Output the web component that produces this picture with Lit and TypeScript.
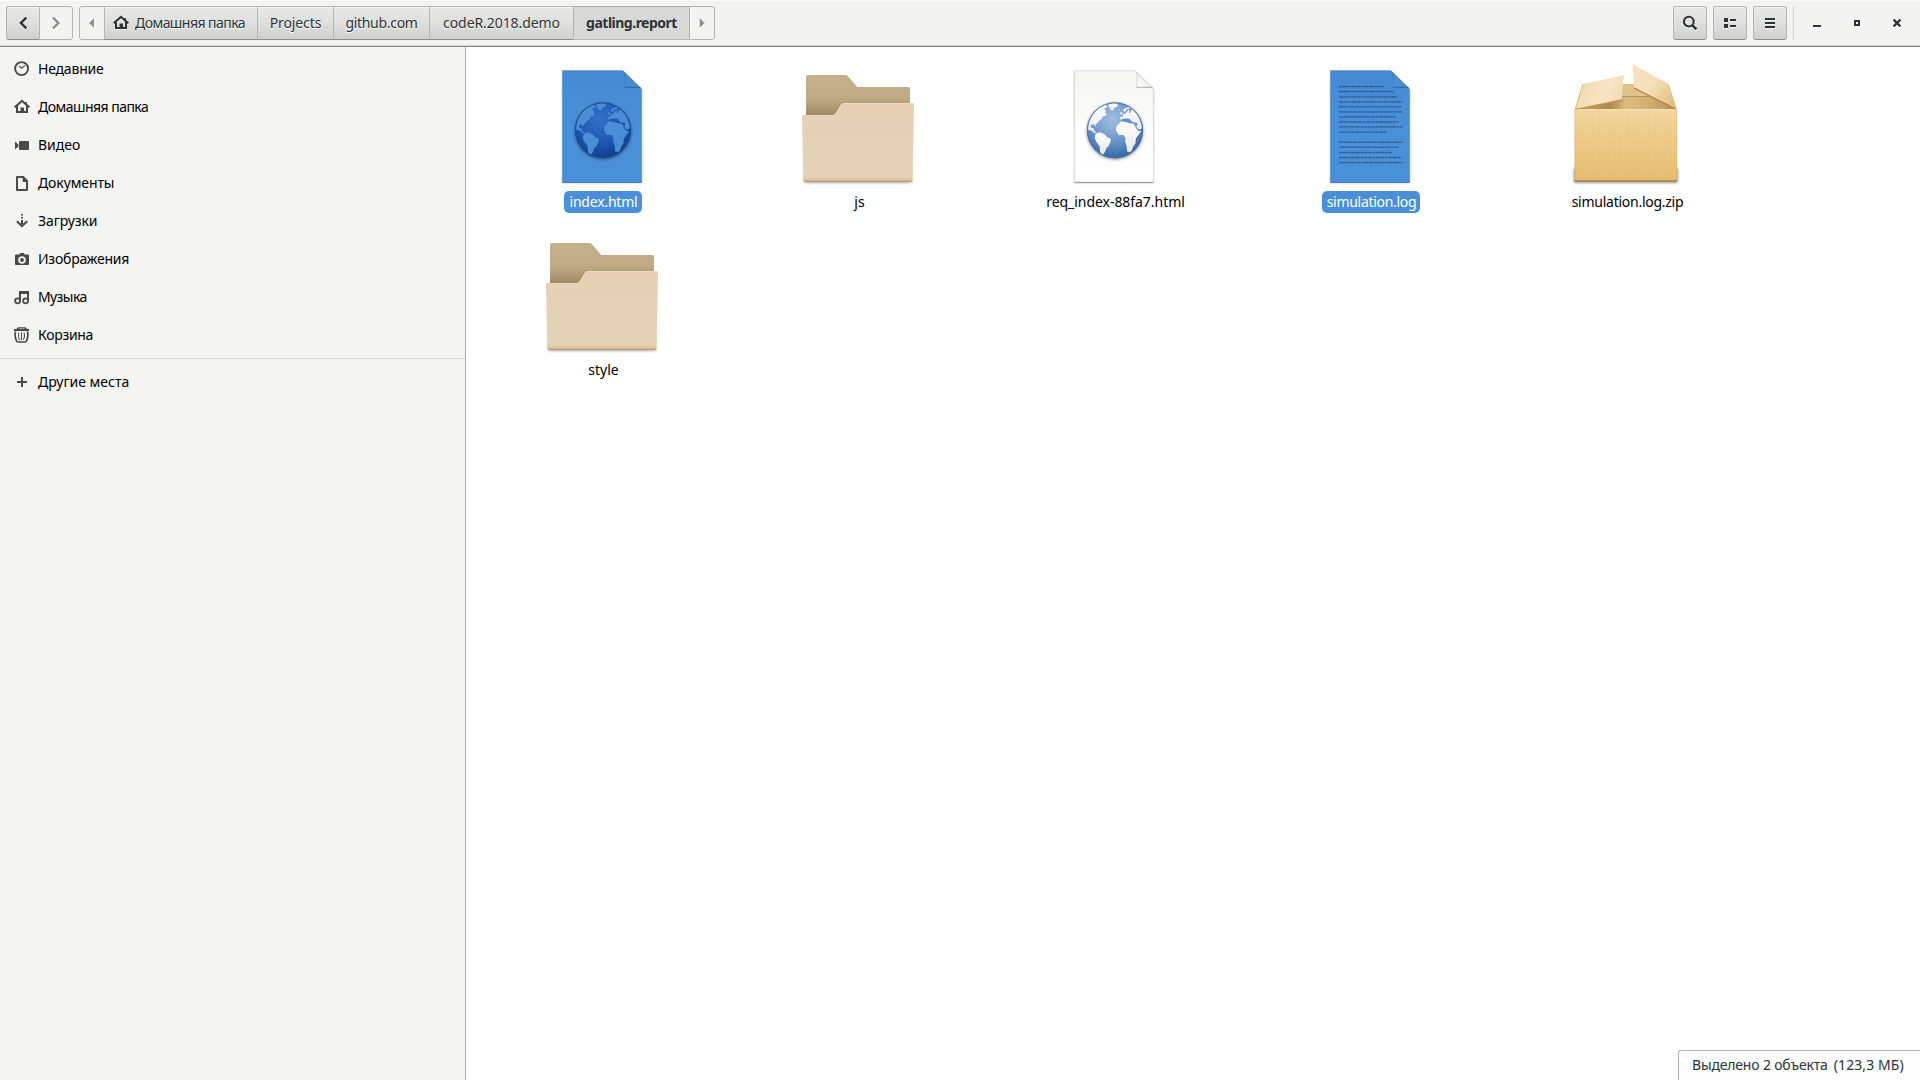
import { LitElement, html, svg, css, TemplateResult } from "lit";
import { customElement } from "lit/decorators.js";
import { classMap } from "lit/directives/class-map.js";

type Label = { text: string; track?: number };
type Place = Label & { icon: TemplateResult };
type FileItem = Label & { art: TemplateResult; selected?: boolean };

/* ---------- 16px symbolic icons ---------- */
const sym = (body: TemplateResult) =>
  html`<svg class="sym" width="16" height="16" viewBox="0 0 16 16" fill="currentColor">${body}</svg>`;

const icons = {
  home: sym(svg`<path d="M8 .6 0 7.4 1.300 9 2 8.400V14h12V8.400l.7.6L16 7.400 12.900 4.800V3h-1.600v.5zM8 3.200l4 3.500V12h-2V8.500H6.500V12H4V6.700z" fill-rule="evenodd"/>`),
  clock: sym(svg`<circle cx="7.6" cy="7.6" r="6.5" fill="none" stroke="currentColor" stroke-width="1.9"/><path d="M5 4.8 7.5 7.2 11.2 4.4" fill="none" stroke="currentColor" stroke-width="1.1"/>`),
  video: sym(svg`<path d="M1 4.400 4.400 7.400V9.600L1 12.600z"/><rect x="5" y="4" width="10" height="9" rx="1"/>`),
  doc: sym(svg`<path d="M2 2Q2 1 3 1H9.700L14 5.400V15Q14 16 13 16H3Q2 16 2 15zM4 3V14H12V7H9.600Q8.600 7 8.600 6V3z" fill-rule="evenodd"/>`),
  download: sym(svg`<path d="M7 1h2v1.600H7zM7 4h2v1.600H7zM7 7h2v4H7z"/><path d="M2.800 8.300 8 13 13.200 8.300" fill="none" stroke="currentColor" stroke-width="2.200"/>`),
  camera: sym(svg`<path d="M5.400 3.600 6 2h4l.6 1.600H14q1 0 1 1V13q0 1-1 1H2q-1 0-1-1V4.600q0-1 1-1zM8 5.200a3.800 3.800 0 1 0 0 7.600 3.800 3.800 0 1 0 0-7.600zM8 7.100a1.900 1.900 0 1 1 0 3.800 1.900 1.900 0 1 1 0-3.800z" fill-rule="evenodd"/>`),
  music: sym(svg`<path d="M5 2h10v10h-2V5H7v7H5z"/><circle cx="3.600" cy="11.800" r="2.500" fill="none" stroke="currentColor" stroke-width="1.800"/><circle cx="11.600" cy="11.800" r="2.500" fill="none" stroke="currentColor" stroke-width="1.800"/>`),
  trash: sym(svg`<path d="M0 2h2.500l1.300-1.800h8L13 2h2v2H0zM4.600 2h6.200l-.5-.6H5.100z" fill-rule="evenodd"/><path d="M1.500 4.500Q.4 9.500 2.200 13.200 2.700 15 4.300 15h6.400Q12.300 15 12.800 13.200 14.600 9.500 13.500 4.500" fill="none" stroke="currentColor" stroke-width="1.700"/><path d="M4.900 5.500Q3.700 9 5.500 13M7.500 5.500V13.200M10.100 5.500Q11.300 9 9.500 13" fill="none" stroke="currentColor" stroke-width="1"/>`),
  plus: sym(svg`<path d="M7 3h2v4h4v2H9v4H7V9H3V7h4z"/>`),
  back: sym(svg`<path d="M11.300 2.600 5.900 8l5.400 5.400" fill="none" stroke="currentColor" stroke-width="2.400"/>`),
  forward: sym(svg`<path d="M5 2.600 10.400 8 5 13.400" fill="none" stroke="currentColor" stroke-width="2.400"/>`),
  triLeft: sym(svg`<path d="M10 3.300V12.700L5 8z"/>`),
  triRight: sym(svg`<path d="M5.700 3.300V12.700L10.700 8z"/>`),
  search: sym(svg`<circle cx="6.800" cy="6.600" r="4.900" fill="none" stroke="currentColor" stroke-width="2.100"/><path d="M10.400 10.300 14.400 14.300" stroke="currentColor" stroke-width="2.500"/>`),
  list: sym(svg`<path d="M2 3h4v4H2zM2 9h4v4H2zM8 4h6v2H8zM8 10h6v2H8z"/>`),
  menu: sym(svg`<path d="M3 3h10v2H3zM3 7h10v2H3zM3 11h10v2H3z"/>`),
  minimize: sym(svg`<path d="M4 10h8v2H4z"/>`),
  maximize: sym(svg`<path d="M5 5h6v6H5zM7 7v2h2V7z" fill-rule="evenodd"/>`),
  close: sym(svg`<path d="M4.600 4.600 11.400 11.400M11.400 4.600 4.600 11.400" stroke="currentColor" stroke-width="2.200"/>`),
};

/* ---------- 128px file artwork; inner groups use a 3x drawing grid ---------- */
const art = (body: TemplateResult) =>
  html`<svg class="art" width="128" height="128" viewBox="0 0 128 128">${body}</svg>`;

const page = (on: boolean, id: string, body: TemplateResult) => art(svg`
  <defs>
    <linearGradient id="${id}-p" x1="0" y1="0" x2="0" y2="1">
      <stop offset="0" stop-color="${on ? "#468ad2" : "#f5f5f3"}"/>
      <stop offset=".55" stop-color="${on ? "#4a90d9" : "#fdfdfd"}"/>
      <stop offset="1" stop-color="${on ? "#4a90d9" : "#ffffff"}"/>
    </linearGradient>
    <linearGradient id="${id}-f" x1="0" y1="1" x2=".7" y2=".3">
      <stop offset="0" stop-color="${on ? "#4a90d9" : "#ffffff"}"/>
      <stop offset="1" stop-color="${on ? "#4788cf" : "#ececea"}"/>
    </linearGradient>
    <filter id="${id}-s" x="-10%" y="-10%" width="120%" height="120%"><feGaussianBlur stdDeviation="1"/></filter>
  </defs>
  <path d="M24.500 13.500H85L103.500 32V125H24.500z" fill="#000" opacity=".28" filter="url(#${id}-s)"/>
  <path d="M24.600 12.700H84.800L103.400 31V124.300H24.600z" fill="url(#${id}-p)" stroke="${on ? "#4482c6" : "#d2d2d0"}" stroke-width=".6"/>
  <path d="M24.300 124.400H103.700" stroke="${on ? "#3a6ea8" : "#8d8d8b"}" stroke-width=".8"/>
  <path d="M86.800 14.700V29.400H102z" fill="url(#${id}-f)"/>
  <path d="M86.800 29.300H102.500" stroke="${on ? "#2c5f9c" : "#a2a2a0"}" stroke-width=".9"/>
  <path d="M86.800 14.700V29.300M84.800 12.900 103.400 31" stroke="${on ? "#3a75b8" : "#c4c4c2"}" stroke-width=".6" fill="none"/>
  ${body}`);

const LAND = [
  "M172 224 172 205 182 180 196 163 210 154 226 149 232 153 230 158 222 160 228 168 226 173 231 180 222 184 217 184 217 191 209 196 203 203 198 208 196 216 192 208 184 209 182 217 188 220 190 219 194 229 201 234 197 236 187 229 178 225z",
  "M234 149 248 144 262 146 264 154 254 158 248 168 240 162z",
  "M214 150 224 146 230 147 222 153zM226 175 231 178 227 180z",
  "M197 238 206 232 216 234 226 240 231 246 243 252 241 262 236 273 229 279 226 288 220 299 214 298 210 290 209 274 199 260 194 249z",
  "M258 226 259 214 267 206 273 199 286 198 296 204 306 204 312 208 318 219 326 229 334 228 327 238 318 250 316 266 310 274 305 288 297 292 291 289 290 274 286 262 286 248 280 240 266 240z",
  "M271 194 270 186 279 185 279 178 286 176 293 167 300 165 296 174 302 172 304 165 310 160 322 174 333 192 338 213 334 222 326 224 316 210 323 212 321 204 306 200 300 192 292 190 285 193z",
  "M270 174 275 170 278 178 273 180zM281 162 290 158 299 156 302 160 290 163 284 172 280 168zM266 166 271 166 270 169z",
];

const globe = (on: boolean, id: string) => svg`
  <defs>
    <radialGradient id="${id}-o" cx=".45" cy=".3" r=".72">
      <stop offset="0" stop-color="${on ? "#3472c8" : "#a3bfe2"}"/>
      <stop offset=".55" stop-color="${on ? "#2059b2" : "#6b96cb"}"/>
      <stop offset="1" stop-color="${on ? "#0f3c8c" : "#3264a5"}"/>
    </radialGradient>
    <linearGradient id="${id}-l" x1="0" y1="0" x2="0" y2="1">
      <stop offset="0" stop-color="${on ? "#4a8fd9" : "#ffffff"}"/>
      <stop offset="1" stop-color="${on ? "#4a8bd0" : "#e9e9e8"}"/>
    </linearGradient>
    <clipPath id="${id}-c"><circle cx="255" cy="226" r="82"/></clipPath>
    <filter id="${id}-b" x="-20%" y="-20%" width="140%" height="140%"><feGaussianBlur stdDeviation="4"/></filter>
  </defs>
  <g transform="translate(-20 -3) scale(.33333)">
    <circle cx="255" cy="229" r="85" fill="#000" opacity=".4" filter="url(#${id}-b)"/>
    <circle cx="255" cy="226" r="84" fill="url(#${id}-o)"/>
    <g clip-path="url(#${id}-c)" fill="url(#${id}-l)">${LAND.map((d) => svg`<path d="${d}"/>`)}
      <path d="M272 195Q284 186 296 194L308 201 306 206 290 202 276 199z" fill="${on ? "#2059b2" : "#6690c8"}"/>
    </g>
    <circle cx="255" cy="226" r="82.500" fill="none" stroke="${on ? "#1b4a8c" : "#47699b"}" stroke-width="3" opacity=".8"/>
  </g>`;

/* y position and right end of each line of the text preview */
const LINES: [number, number][] = [
  [95, 221], [110, 250], [126, 262], [141, 277], [156, 272], [171, 277], [186, 257], [201, 267], [216, 277], [232, 228],
  [262, 277], [277, 265], [293, 247], [308, 275], [323, 277],
];
const textLines = svg`<g transform="translate(4 -3) scale(.33333)" fill="none">
  ${LINES.map(([y, x], i) => svg`
    <path d="M86 ${y}H${x}" stroke="#2a5689" stroke-width="3" opacity=".5"/>
    <path d="M${87 + (i % 3)} ${y - 0.5}H${x}" stroke="#1b3d66" stroke-width="4" stroke-dasharray="${9 + (i % 4)} 3 ${14 - (i % 5)} 4 6 3" opacity=".42"/>`)}
</g>`;

const folder = (id: string) => art(svg`
  <defs>
    <linearGradient id="${id}-b" x1="0" y1="60" x2="0" y2="182" gradientUnits="userSpaceOnUse">
      <stop offset="0" stop-color="#c3b18c"/><stop offset=".55" stop-color="#bfac86"/><stop offset="1" stop-color="#a08a66"/>
    </linearGradient>
    <linearGradient id="${id}-f" x1="0" y1="144" x2="0" y2="380" gradientUnits="userSpaceOnUse">
      <stop offset="0" stop-color="#e4cfb4"/><stop offset=".94" stop-color="#e4d3b9"/><stop offset=".97" stop-color="#dfc6a4"/><stop offset="1" stop-color="#cba980"/>
    </linearGradient>
    <filter id="${id}-s" x="-10%" y="-10%" width="120%" height="130%"><feGaussianBlur stdDeviation="4"/></filter>
  </defs>
  <g transform="translate(-14 -3) scale(.33333)">
    <path d="M74 340H394V384H74z" fill="#000" opacity=".32" filter="url(#${id}-s)"/>
    <path d="M78 190V66Q78 60 84 60H196Q200 60 203 63L232 96H385Q390 96 390 101V170z" fill="url(#${id}-b)"/>
    <path d="M66 186Q66 180 72 180H158Q163 180 166 176L184 148Q187 144 192 144H396Q402 144 402 150L398 376Q398 380 394 380H74Q70 380 70 376z" fill="url(#${id}-f)"/>
    <path d="M67 186Q67 181.500 72 181.500H158Q164 181 167 177L185 149Q187 145.500 192 145.500H396Q401 146 401 150" fill="none" stroke="#ebdac4" stroke-width="2.500"/>
    <path d="M71 379.500H397" stroke="#b3936c" stroke-width="2"/>
  </g>`);

const box = art(svg`
  <defs>
    <linearGradient id="zf" x1="0" y1="0" x2="0" y2="1"><stop offset="0" stop-color="#f3d9a3"/><stop offset=".5" stop-color="#ecca86"/><stop offset="1" stop-color="#e4bd70"/></linearGradient>
    <linearGradient id="zl" x1="0" y1="0" x2="1" y2=".3"><stop offset="0" stop-color="#efd6a8"/><stop offset=".7" stop-color="#f7e5c6"/><stop offset="1" stop-color="#f3dcb4"/></linearGradient>
    <linearGradient id="zr" x1="0" y1="0" x2="1" y2=".8"><stop offset="0" stop-color="#f6e2c0"/><stop offset=".5" stop-color="#f4dfba"/><stop offset="1" stop-color="#e3bf80"/></linearGradient>
    <linearGradient id="zi" x1="0" y1="0" x2="1" y2="0"><stop offset="0" stop-color="#c9a768"/><stop offset=".35" stop-color="#a98a52"/><stop offset=".5" stop-color="#dcbd82"/><stop offset=".7" stop-color="#d3b274"/><stop offset="1" stop-color="#b08f55"/></linearGradient>
    <pattern id="zc" width="7" height="10" patternUnits="userSpaceOnUse"><path d="M1 0V10" stroke="#d9ac58" stroke-width="1.500" opacity=".3"/></pattern>
    <filter id="zs" x="-10%" y="-10%" width="120%" height="130%"><feGaussianBlur stdDeviation="5"/></filter>
  </defs>
  <g transform="translate(-12 -3) scale(.33333)">
    <path d="M72 340H383V383H72z" fill="#000" opacity=".45" filter="url(#zs)"/>
    <path d="M98 87H354L380 164H74z" fill="url(#zi)"/>
    <path d="M219 88H262L300 124H218z" fill="#e0c48d"/>
    <path d="M217 124.500H298" stroke="#a98a54" stroke-width="2.500"/>
    <rect x="74" y="162" width="307" height="217" rx="2" fill="url(#zf)"/>
    <rect x="74" y="166" width="307" height="210" fill="url(#zc)"/>
    <path d="M74 164H381" stroke="#f7e2b8" stroke-width="2"/>
    <path d="M74.500 164V377M380.500 164V377" stroke="#c79c50" stroke-width="1.500" opacity=".7"/>
    <path d="M74 378H381" stroke="#8c6a36" stroke-width="3"/>
    <path d="M78 164 216 138 217 131 80 158z" fill="#bf944f"/>
    <path d="M98 88 221 61 216 133 77 161z" fill="url(#zl)"/>
    <path d="M252 101 377 164 378 157 252 95z" fill="#b5863e"/>
    <path d="M247 27 355 87 379 161 252 97z" fill="url(#zr)"/>
    <path d="M98 88 77 161M355 87 379 161" stroke="#d8b67a" stroke-width="1.500" fill="none"/>
  </g>`);

/* ---------- data ---------- */
const PLACES: Place[] = [
  { text: "Недавние", track: -0.2, icon: icons.clock },
  { text: "Домашняя папка", track: -0.53, icon: icons.home },
  { text: "Видео", icon: icons.video },
  { text: "Документы", track: -0.1, icon: icons.doc },
  { text: "Загрузки", track: -0.1, icon: icons.download },
  { text: "Изображения", track: -0.22, icon: icons.camera },
  { text: "Музыка", track: -0.6, icon: icons.music },
  { text: "Корзина", track: -0.3, icon: icons.trash },
];

const FILES: FileItem[] = [
  { text: "index.html", track: -0.2, selected: true, art: page(true, "ix", globe(true, "ixg")) },
  { text: "js", art: folder("js") },
  { text: "req_index-88fa7.html", track: -0.05, art: page(false, "rq", globe(false, "rqg")) },
  { text: "simulation.log", track: -0.3, selected: true, art: page(true, "lg", textLines) },
  { text: "simulation.log.zip", track: -0.26, art: box },
  { text: "style", art: folder("st") },
];

const label = (l: Label) => html`<span style="letter-spacing:${l.track ?? 0}px">${l.text}</span>`;

@customElement("app-root")
export class AppRoot extends LitElement {
  static styles = css`
    :host {
      display: block;
      font: 14px/20px "Noto Sans", "Open Sans", sans-serif;
      color: #000;
    }
    * { box-sizing: border-box; }
    svg { display: block; flex: none; }
    .window {
      display: grid;
      grid-template: 47px 1fr / 466px 1fr;
      width: 1920px;
      height: 1080px;
      background: #fff;
      overflow: hidden;
      white-space: nowrap;
    }
    .header {
      grid-column: 1 / -1;
      display: flex;
      align-items: flex-start;
      padding: 6px 3px 0 6px;
      background: #f3f3f2;
      border-bottom: 1px solid #878984;
      box-shadow: inset 0 1px #fbfbfb, inset 0 -1px #d3d3d0;
      color: #2e3436;
    }
    .group { display: flex; height: 34px; }
    .nav { width: 67px; margin-right: 6px; }
    .btn {
      display: flex;
      align-items: center;
      justify-content: center;
      height: 34px;
      border: 1px solid #b6b6b3;
      border-bottom-color: #8f8f8a;
      background: linear-gradient(#e8e8e7, #dfdfdd 50%, #d0d0ce);
      box-shadow: inset 0 1px #f6f6f5;
      text-shadow: 0 1px #fff;
    }
    .btn .sym { filter: drop-shadow(0 1px 0 rgba(255, 255, 255, 0.75)); }
    .group .btn + .btn { margin-left: -1px; }
    .group .btn:first-child { border-radius: 3px 0 0 3px; }
    .group .btn:last-child { border-radius: 0 3px 3px 0; }
    .btn.dim {
      background: #f3f3f2;
      border-color: #b6b6b3;
      box-shadow: none;
      color: #8d9091;
    }
    .btn.active {
      background: #d8d8d6;
      border-color: #b6b6b3;
      box-shadow: none;
      font-weight: 700;
      text-shadow: none;
    }
    .w-nav { width: 34px; }
    .w-tri { width: 26px; }
    .w-home { width: 154px; gap: 6px; padding-right: 4px; }
    .w-projects { width: 77px; }
    .w-github { width: 97px; }
    .w-coder { width: 145px; }
    .w-gatling { width: 117px; }
    .tools { display: flex; gap: 6px; margin-left: auto; }
    .tools .btn { width: 34px; border-radius: 3px; }
    .rule { width: 1px; height: 34px; margin: 0 3px 0 6px; background: #d5d5d3; }
    .win { display: flex; align-items: center; justify-content: center; width: 40px; height: 34px; }
    .win .sym { filter: drop-shadow(0 1px 0 #fff); }
    .sidebar {
      padding-top: 3px;
      background: #f4f4f2;
      border-right: 1px solid #b1b1ae;
    }
    .place { display: flex; align-items: center; gap: 8px; height: 38px; padding-left: 14px; }
    .place .sym { color: #4a4a48; }
    .split { height: 1px; margin: 4px 0; background: #dadad8; }
    .view {
      position: relative;
      display: grid;
      grid-template-columns: repeat(5, 256px);
      grid-auto-rows: 168px;
      align-content: start;
      padding: 11px 0 0 8px;
    }
    .file { display: flex; flex-direction: column; align-items: center; gap: 5px; }
    .name { height: 22px; margin-left: 2px; padding: 1px 4px 1px 5px; border-radius: 5px; }
    .name.selected { background: #4a90d9; color: #fff; }
    .status {
      position: absolute;
      right: 0;
      bottom: 0;
      display: flex;
      gap: 6px;
      width: 242px;
      height: 30px;
      padding: 4px 0 0 13px;
      border: solid #b1b1ae;
      border-width: 1px 0 0 1px;
      border-top-left-radius: 3px;
      background: #fdfdfd;
      color: #2e3436;
    }
  `;

  render() {
    return html`
      <div class="window">
        <header class="header">
          <div class="group nav">
            <div class="btn w-nav">${icons.back}</div>
            <div class="btn dim w-nav">${icons.forward}</div>
          </div>
          <div class="group">
            <div class="btn dim w-tri">${icons.triLeft}</div>
            <div class="btn w-home">${icons.home}${label({ text: "Домашняя папка", track: -0.55 })}</div>
            <div class="btn w-projects">${label({ text: "Projects", track: -0.1 })}</div>
            <div class="btn w-github">${label({ text: "github.com", track: -0.3 })}</div>
            <div class="btn w-coder">${label({ text: "codeR.2018.demo", track: -0.08 })}</div>
            <div class="btn active w-gatling">${label({ text: "gatling.report", track: -0.5 })}</div>
            <div class="btn dim w-tri">${icons.triRight}</div>
          </div>
          <div class="tools">
            <div class="btn">${icons.search}</div>
            <div class="btn">${icons.list}</div>
            <div class="btn">${icons.menu}</div>
          </div>
          <div class="rule"></div>
          <div class="win">${icons.minimize}</div>
          <div class="win">${icons.maximize}</div>
          <div class="win">${icons.close}</div>
        </header>
        <nav class="sidebar">
          ${PLACES.map((p) => html`<div class="place">${p.icon}${label(p)}</div>`)}
          <div class="split"></div>
          <div class="place">${icons.plus}${label({ text: "Другие места" })}</div>
        </nav>
        <main class="view">
          ${FILES.map((f) => html`
            <div class="file">
              ${f.art}
              <div class=${classMap({ name: true, selected: !!f.selected })}>${label(f)}</div>
            </div>`)}
          <div class="status">
            ${label({ text: "Выделено 2 объекта", track: -0.17 })}
            ${label({ text: "(123,3 МБ)", track: 0.1 })}
          </div>
        </main>
      </div>
    `;
  }
}
